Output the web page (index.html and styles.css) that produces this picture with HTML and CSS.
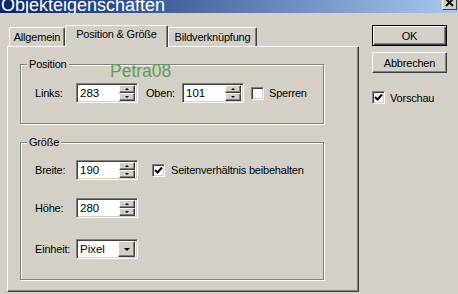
FILE: index.html
```html
<!DOCTYPE html>
<html lang="de">
<head>
  <meta charset="UTF-8">
  <title>Objekteigenschaften</title>
  <link rel="stylesheet" href="styles.css">
</head>
<body>
  <div class="titlebar">
    <span class="title">Objekteigenschaften</span>
    <span class="close">
      <svg width="9" height="8" viewBox="0 0 9 8"><path d="M1 0 L8 7 M8 0 L1 7" stroke="#000" stroke-width="2"/></svg>
    </span>
  </div>

  <div class="main">
    <div class="tabarea">
      <div class="tabs">
        <div class="tab tab-allg">Allgemein</div>
        <div class="tab active">Position &amp; Größe</div>
        <div class="tab tab-bild">Bildverknüpfung</div>
      </div>

      <div class="panel">
        <!-- Position -->
        <div class="group group-pos">
          <span class="legend">Position</span>
          <div class="row row-first">
            <span class="lbl">Links:</span>
            <div class="spin"><span class="val">283</span><span class="arrows"><span class="up"></span><span class="down"></span></span></div>
            <span class="lbl lbl-oben">Oben:</span>
            <div class="spin"><span class="val">101</span><span class="arrows"><span class="up"></span><span class="down"></span></span></div>
            <span class="check check-sperren"></span>
            <span class="check-label">Sperren</span>
          </div>
        </div>

        <!-- Größe -->
        <div class="group group-size">
          <span class="legend">Größe</span>
          <div class="row row-first-size">
            <span class="lbl">Breite:</span>
            <div class="spin"><span class="val">190</span><span class="arrows"><span class="up"></span><span class="down"></span></span></div>
            <span class="check checked check-ratio">
              <svg width="9" height="9" viewBox="0 0 9 9"><path d="M1 4 L3.5 6.5 L8 1.5" fill="none" stroke="#000" stroke-width="2"/></svg>
            </span>
            <span class="check-label">Seitenverhältnis beibehalten</span>
          </div>
          <div class="row row-hoehe">
            <span class="lbl">Höhe:</span>
            <div class="spin"><span class="val">280</span><span class="arrows"><span class="up"></span><span class="down"></span></span></div>
          </div>
          <div class="row row-einheit">
            <span class="lbl">Einheit:</span>
            <div class="select"><span class="val">Pixel</span><span class="drop"></span></div>
          </div>
        </div>
      </div>
    </div>

    <div class="side">
      <button class="btn btn-default">OK</button>
      <button class="btn btn-cancel">Abbrechen</button>
      <div class="preview">
        <span class="check checked">
          <svg width="9" height="9" viewBox="0 0 9 9"><path d="M1 4 L3.5 6.5 L8 1.5" fill="none" stroke="#000" stroke-width="2"/></svg>
        </span>
        <span class="check-label">Vorschau</span>
      </div>
    </div>
  </div>

  <div class="watermark">Petra08</div>
</body>
</html>
```

FILE: styles.css
```css
body {
  margin: 0;
  width: 458px;
  height: 294px;
  overflow: hidden;
  background: #d4d0c8;
  font-family: 'Liberation Sans', Arial, sans-serif;
  font-size: 11px;
  letter-spacing: -0.2px;
  color: #000;
  position: relative;
}

.titlebar {
  height: 13px;
  overflow: hidden;
  background: linear-gradient(90deg, #0a246a, #a6caf0);
  display: flex;
  justify-content: space-between;
  align-items: flex-start;
}

.title {
  display: block;
  margin-top: -1px;
  padding-left: 1px;
  font-size: 18px;
  line-height: 13px;
  letter-spacing: 0;
  color: #fff;
}

.close {
  width: 15px;
  height: 14px;
  margin-top: -4px;
  margin-right: 1px;
  box-sizing: border-box;
  background: #d4d0c8;
  border: 1px solid;
  border-color: #fff #404040 #404040 #fff;
  display: flex;
  align-items: flex-end;
  justify-content: center;
  padding-bottom: 2px;
}

.main {
  display: flex;
  padding: 12px 0 0 7px;
}

/* tabs */
.tabs {
  display: flex;
  align-items: flex-end;
  height: 21px;
  padding-left: 2px;
}

.tab {
  box-sizing: border-box;
  height: 19px;
  padding-top: 3px;
  line-height: 13px;
  text-align: center;
  border: 1px solid;
  border-bottom: none;
  border-color: #fff #404040 #fff #fff;
  border-radius: 2px 2px 0 0;
  box-shadow: inset -1px 0 #808080;
}

.tab-allg { width: 56px; }
.tab-bild { width: 89px; }

.tab.active {
  width: 103px;
  height: 22px;
  padding-top: 2px;
  margin-bottom: -1px;
  background: #d4d0c8;
  position: relative;
  z-index: 1;
}

.panel {
  box-sizing: border-box;
  width: 352px;
  height: 246px;
  padding: 17px 0 0 12px;
  border: 1px solid;
  border-color: #fff #404040 #404040 #fff;
  box-shadow: inset -1px -1px #808080;
}

/* group boxes */
.group {
  box-sizing: border-box;
  width: 304px;
  border: 1px solid #808080;
  box-shadow: inset 1px 1px #fff, 1px 1px #fff;
  padding-left: 14px;
}

.group-pos { padding-bottom: 20px; }

.group-size {
  margin-top: 18px;
  padding-bottom: 20px;
}

.legend {
  display: block;
  width: max-content;
  height: 13px;
  margin: -7px 0 0 -8px;
  padding: 0 2px;
  line-height: 13px;
  background: #d4d0c8;
}

.row {
  display: flex;
  align-items: center;
  height: 20px;
}

.row-first { margin-top: 12px; }
.row-first-size { margin-top: 11px; }
.row-hoehe { margin-top: 18px; }
.row-einheit { margin-top: 21px; }

.lbl { width: 41px; }

.lbl-oben {
  width: 36px;
  margin-left: 8px;
}

/* spin box */
.spin, .select {
  box-sizing: border-box;
  width: 62px;
  height: 20px;
  display: flex;
  align-items: center;
  background: #fff;
  border: 1px solid;
  border-color: #808080 #fff #fff #808080;
  box-shadow: inset 1px 1px #404040, inset -1px -1px #d4d0c8;
  padding: 2px 2px 2px 3px;
}

.val {
  flex: 1;
  font-size: 11.5px;
  letter-spacing: 0;
}

.arrows {
  display: flex;
  flex-direction: column;
  width: 16px;
  height: 16px;
}

.up, .down, .drop {
  flex: 1;
  box-sizing: border-box;
  background: #d4d0c8;
  border: 1px solid;
  border-color: #fff #404040 #404040 #fff;
  box-shadow: inset -1px -1px #808080;
  display: flex;
  align-items: center;
  justify-content: center;
}

.up::after, .down::after, .drop::after {
  content: '';
  width: 0;
  height: 0;
  border-left: 2px solid transparent;
  border-right: 2px solid transparent;
}

.up::after { border-bottom: 2px solid #000; }
.down::after { border-top: 2px solid #000; }

.drop {
  flex: none;
  width: 17px;
  height: 16px;
}

.drop::after {
  border-left-width: 3px;
  border-right-width: 3px;
  border-top: 3px solid #000;
}

/* checkboxes */
.check {
  box-sizing: border-box;
  width: 13px;
  height: 13px;
  background: #fff;
  border: 1px solid;
  border-color: #808080 #fff #fff #808080;
  box-shadow: inset 1px 1px #404040, inset -1px -1px #d4d0c8;
  display: flex;
  align-items: center;
  justify-content: center;
}

.check-sperren { margin-left: 7px; }
.check-ratio { margin-left: 14px; }

.check-label { margin-left: 5px; }
.check-ratio + .check-label { margin-left: 6px; }

/* right column */
.side {
  display: flex;
  flex-direction: column;
  width: 75px;
  margin-left: 13px;
}

.btn {
  box-sizing: border-box;
  height: 21px;
  padding: 0;
  font: inherit;
  letter-spacing: inherit;
  color: #000;
  background: #d4d0c8;
  border: 1px solid;
  border-color: #fff #404040 #404040 #fff;
  box-shadow: inset -1px -1px #808080;
}

.btn-default {
  border-color: #000;
  box-shadow: inset 1px 1px #fff, inset -1px -1px #404040, inset -2px -2px #808080;
}

.btn-cancel { margin-top: 6px; }

.preview {
  display: flex;
  align-items: center;
  margin-top: 18px;
}

.watermark {
  position: absolute;
  left: 110px;
  top: 63px;
  font-size: 17.5px;
  line-height: 1;
  letter-spacing: 0;
  color: #63995c;
}
```
